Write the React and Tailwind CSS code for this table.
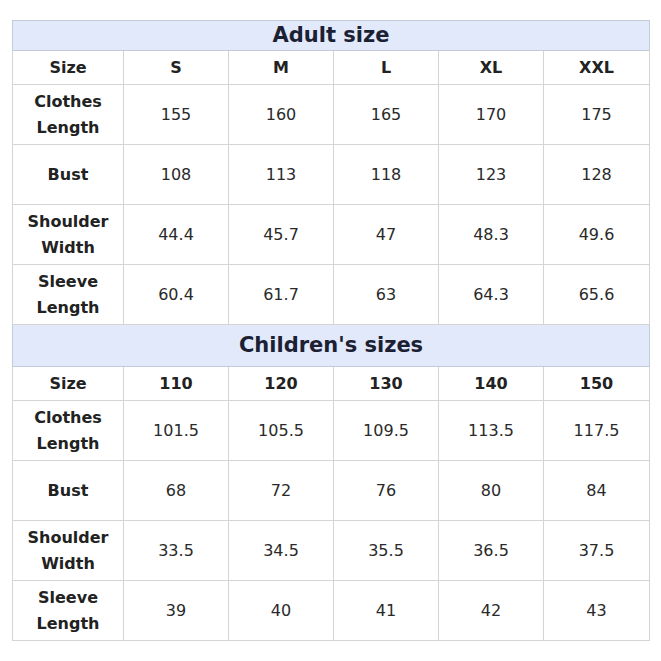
import React from 'react';

const adult = {
    title: 'Adult size',
    sizes: ['S', 'M', 'L', 'XL', 'XXL'],
    rows: [
        {label: ['Clothes', 'Length'], values: ['155', '160', '165', '170', '175']},
        {label: ['Bust'], values: ['108', '113', '118', '123', '128']},
        {label: ['Shoulder', 'Width'], values: ['44.4', '45.7', '47', '48.3', '49.6']},
        {label: ['Sleeve', 'Length'], values: ['60.4', '61.7', '63', '64.3', '65.6']},
    ],
};

const kids = {
    title: "Children's sizes",
    sizes: ['110', '120', '130', '140', '150'],
    rows: [
        {label: ['Clothes', 'Length'], values: ['101.5', '105.5', '109.5', '113.5', '117.5']},
        {label: ['Bust'], values: ['68', '72', '76', '80', '84']},
        {label: ['Shoulder', 'Width'], values: ['33.5', '34.5', '35.5', '36.5', '37.5']},
        {label: ['Sleeve', 'Length'], values: ['39', '40', '41', '42', '43']},
    ],
};

const Section = ({data, titleHeight}) => (
    <>
        <tr>
            <td colSpan="6"
                className={`${titleHeight} bg-[#e1e9fb] border border-[#c3cad8] text-center text-[21px] font-bold text-[#1b2133] leading-none`}>
                {data.title}
            </td>
        </tr>
        <tr>
            <td className="h-[34px] border border-[#d4d4d4] text-center text-[16px] font-bold">Size</td>
            {data.sizes.map((s) => (
                <td key={s} className="h-[34px] border border-[#d4d4d4] text-center text-[16px] font-bold">{s}</td>
            ))}
        </tr>
        {data.rows.map((row) => (
            <tr key={row.label.join(' ')}>
                <td className="h-[60px] border border-[#d4d4d4] text-center text-[16px] font-bold leading-[26px]">
                    {row.label.map((l) => (
                        <div key={l}>{l}</div>
                    ))}
                </td>
                {row.values.map((v, i) => (
                    <td key={i} className="h-[60px] border border-[#d4d4d4] text-center text-[16px] text-[#2a2a2a]">{v}</td>
                ))}
            </tr>
        ))}
    </>
);

export default function App() {
    return (
        <div className="w-[661px] h-[661px] bg-white pt-[20px] pl-[12px]"
             style={{fontFamily: '"DejaVu Sans", Verdana, sans-serif'}}>
            <table className="w-[637px] table-fixed border-collapse text-[#222]">
                <colgroup>
                    <col className="w-[111px]"/>
                    <col className="w-[105px]"/>
                    <col className="w-[105px]"/>
                    <col className="w-[105px]"/>
                    <col className="w-[105px]"/>
                    <col className="w-[106px]"/>
                </colgroup>
                <tbody>
                <Section data={adult} titleHeight="h-[30px]"/>
                <Section data={kids} titleHeight="h-[42px]"/>
                </tbody>
            </table>
        </div>
    );
}
